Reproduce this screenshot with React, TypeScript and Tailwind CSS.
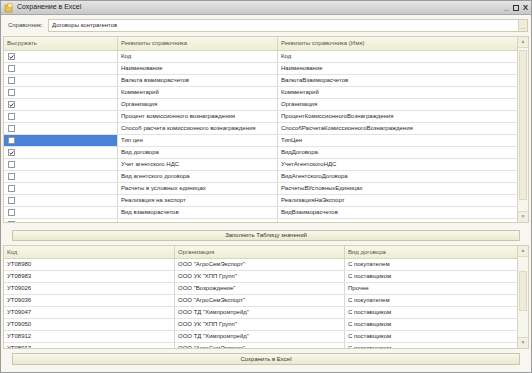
import React from "react";

const rows1: [boolean, string, string][] = [
  [true, "Код", "Код"],
  [false, "Наименование", "Наименование"],
  [false, "Валюта взаиморасчетов", "ВалютаВзаиморасчетов"],
  [false, "Комментарий", "Комментарий"],
  [true, "Организация", "Организация"],
  [false, "Процент комиссионного вознаграждения", "ПроцентКомиссионногоВознаграждения"],
  [false, "Способ расчета комиссионного вознаграждения", "СпособРасчетаКомиссионногоВознаграждения"],
  [false, "Тип цен", "ТипЦен"],
  [true, "Вид договора", "ВидДоговора"],
  [false, "Учет агентского НДС", "УчетАгентскогоНДС"],
  [false, "Вид агентского договора", "ВидАгентскогоДоговора"],
  [false, "Расчеты в условных единицах", "РасчетыВУсловныхЕдиницах"],
  [false, "Реализация на экспорт", "РеализацияНаЭкспорт"],
  [false, "Вид взаиморасчетов", "ВидВзаиморасчетов"],
  [false, "Валюта", "Валюта"],
];

const rows2: [string, string, string][] = [
  ["УТ08980", 'ООО "АгроСемЭкспорт"', "С покупателем"],
  ["УТ08983", 'ООО УК "ХПП Групп"', "С поставщиком"],
  ["УТ09026", 'ООО "Возрождение"', "Прочее"],
  ["УТ09036", 'ООО "АгроСемЭкспорт"', "С покупателем"],
  ["УТ09047", 'ООО ТД "Химпромтрейд"', "С поставщиком"],
  ["УТ09050", 'ООО УК "ХПП Групп"', "С поставщиком"],
  ["УТ08912", 'ООО ТД "Химпромтрейд"', "С поставщиком"],
  ["УТ08917", 'ООО "АгроСемЭкспорт"', "С поставщиком"],
];

function Check({ on }: { on: boolean }) {
  return (
    <div className="w-[7px] h-[7px] border border-[#8e9aa6] bg-white flex items-center justify-center">
      {on && (
        <svg width="6" height="6" viewBox="0 0 6 6">
          <path d="M0.8 3 L2.4 4.6 L5.2 1.2" stroke="#222" strokeWidth="1.1" fill="none" />
        </svg>
      )}
    </div>
  );
}

function Scrollbar({ thumbTop, thumbH }: { thumbTop: number; thumbH: number }) {
  return (
    <div className="w-[11px] border-l border-[#d6d3bf] bg-[#f7f6ec] flex flex-col relative">
      <div className="h-[11px] flex items-center justify-center text-[5px] text-[#999] border-b border-[#dedbc6] bg-[#f1efe0]">▲</div>
      <div className="flex-1 relative">
        <div
          className="absolute left-[1px] right-[1px] bg-[#eeecd9] border border-[#dcd9c2]"
          style={{ top: thumbTop, height: thumbH }}
        />
      </div>
      <div className="h-[11px] flex items-center justify-center text-[5px] text-[#999] border-t border-[#dedbc6] bg-[#f1efe0]">▼</div>
    </div>
  );
}

export default function App() {
  return (
    <div
      className="w-[532px] h-[373px] overflow-hidden bg-white text-[#2b2b2b]"
      style={{ fontFamily: '"Liberation Sans", Arial, sans-serif' }}
    >
      <div className="w-full h-full border border-[#9a9a9a] flex flex-col">
        {/* Title bar */}
        <div className="h-[14px] flex items-center bg-gradient-to-b from-[#e6e6e6] to-[#c8c8c8] border-b border-[#a8a8a8]">
          <svg width="10" height="10" viewBox="0 0 10 10" className="ml-[3px]">
            <rect x="1" y="2" width="7" height="7" fill="#e8c350" stroke="#b08a20" strokeWidth="0.6" />
            <rect x="4" y="0.5" width="4" height="4" fill="#fff3b0" stroke="#c89a28" strokeWidth="0.5" />
          </svg>
          <span className="ml-[3px] text-[7px] text-[#222]">Сохранение в Excel</span>
          <div className="ml-auto mr-[3px] flex items-center gap-[4px] text-[8px] text-[#333] leading-none">
            <span className="font-bold">_</span>
            <span className="w-[6px] h-[6px] border border-[#333]" />
            <span className="font-bold">X</span>
          </div>
        </div>

        {/* Body */}
        <div className="flex-1 bg-[#f7f6f0] px-[2px] pt-[4px] pb-[3px] flex flex-col">
          <div className="flex items-center h-[13px] ml-[5px]">
            <span className="text-[6px] text-[#444] w-[40px]">Справочник:</span>
            <div className="flex-1 h-[13px] bg-white border border-[#cfcbb3] flex items-center mr-[1px]">
              <span className="ml-[3px] text-[6px]">Договоры контрагентов</span>
              <div className="ml-auto w-[9px] h-[11px] bg-[#efedda] border-l border-[#d6d3bf] flex items-end justify-center text-[6px] leading-[8px] text-[#666]">...</div>
            </div>
          </div>

          {/* Table 1 */}
          <div className="mt-[4px] h-[187px] border border-[#d3d0ba] bg-white flex overflow-hidden">
            <div className="flex-1 flex flex-col overflow-hidden">
              <div className="h-[14px] flex bg-gradient-to-b from-[#f8f7e8] to-[#efedd4] border-b border-[#d8d5bd] text-[6px] text-[#555] shrink-0">
                <div className="w-[114px] pl-[3px] flex items-center border-r border-[#d8d5bd]">Выгружать</div>
                <div className="w-[160px] pl-[3px] flex items-center border-r border-[#d8d5bd]">Реквизиты справочника</div>
                <div className="flex-1 pl-[3px] flex items-center">Реквизиты справочника (Имя)</div>
              </div>
              {rows1.map(([on, a, b], i) => (
                <div key={i} className="h-[12px] flex border-b border-[#e3e3e3] text-[6px] shrink-0">
                  <div
                    className={`w-[114px] pl-[4px] flex items-center border-r border-[#d8d8d8] ${i === 7 ? "bg-[#4a82d8]" : ""}`}
                  >
                    <Check on={on} />
                  </div>
                  <div className="w-[160px] pl-[3px] flex items-center border-r border-[#d8d8d8] whitespace-nowrap overflow-hidden">{a}</div>
                  <div className="flex-1 pl-[3px] flex items-center whitespace-nowrap overflow-hidden">{b}</div>
                </div>
              ))}
            </div>
            <Scrollbar thumbTop={2} thumbH={150} />
          </div>

          <div className="mt-[7px] mx-[9px] h-[11px] border border-[#c9c6ae] bg-gradient-to-b from-[#f9f8ec] to-[#ebe8cf] flex items-center justify-center text-[6px] text-[#333]">
            Заполнить Таблицу значений
          </div>

          {/* Table 2 */}
          <div className="mt-[4px] h-[104px] border border-[#d3d0ba] bg-white flex overflow-hidden">
            <div className="flex-1 flex flex-col overflow-hidden">
              <div className="h-[13px] flex bg-gradient-to-b from-[#f8f7e8] to-[#efedd4] border-b border-[#d8d5bd] text-[6px] text-[#555] shrink-0">
                <div className="w-[171px] pl-[3px] flex items-center border-r border-[#d8d5bd]">Код</div>
                <div className="w-[170px] pl-[3px] flex items-center border-r border-[#d8d5bd]">Организация</div>
                <div className="flex-1 pl-[3px] flex items-center">Вид договора</div>
              </div>
              {rows2.map(([a, b, c], i) => (
                <div key={i} className="h-[12px] flex border-b border-[#e3e3e3] text-[6px] shrink-0">
                  <div className="w-[171px] pl-[3px] flex items-center border-r border-[#d8d8d8]">{a}</div>
                  <div className="w-[170px] pl-[3px] flex items-center border-r border-[#d8d8d8] whitespace-nowrap">{b}</div>
                  <div className="flex-1 pl-[3px] flex items-center whitespace-nowrap">{c}</div>
                </div>
              ))}
            </div>
            <Scrollbar thumbTop={14} thumbH={40} />
          </div>

          <div className="mt-[4px] mx-[9px] h-[12px] border border-[#c9c6ae] bg-gradient-to-b from-[#f9f8ec] to-[#ebe8cf] flex items-center justify-center text-[6px] text-[#333]">
            Сохранить в Excel
          </div>
        </div>
      </div>
    </div>
  );
}
